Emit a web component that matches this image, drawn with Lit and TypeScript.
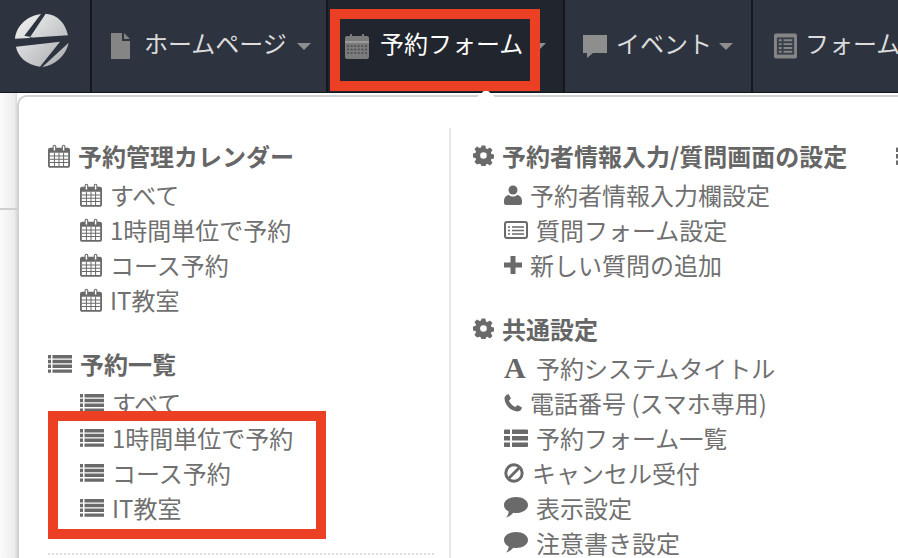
import { LitElement, html, css } from "lit";
import { customElement } from "lit/decorators.js";

const c = "#6a6a6a";
const cal = (s: number) => html`<svg class="ic" width=${s} height=${s + 2} viewBox="0 0 24 26"><path fill=${c} d="M5 4V2.600a2 2 0 0 1 4 0V4h6V2.600a2 2 0 0 1 4 0V4h2.700C22.900 4 24 5 24 6.200v17.300c0 1.200-1.100 2.300-2.300 2.300H2.300C1.100 25.800 0 24.700 0 23.500V6.200C0 5 1.100 4 2.300 4z"/><path fill="#fff" d="M6.200 2.500a.8.800 0 0 1 1.600 0V7H6.200zM16.200 2.500a.8.800 0 0 1 1.600 0V7h-1.600zM2 9.500h20v14.300H2z"/><path stroke=${c} stroke-width="1.100" fill="none" d="M2 13h20M2 16.500h20M2 20h20M7 9.500v14.300M12 9.500v14.300M17 9.500v14.300"/></svg>`;
const navCal = html`<svg class="ni" width="24" height="26" viewBox="0 0 24 26"><path fill="#7b7b7b" d="M5 3V1h2v2h10V1h2v2h3a2 2 0 0 1 2 2v19a2 2 0 0 1-2 2H2a2 2 0 0 1-2-2V5a2 2 0 0 1 2-2z"/><path fill="#9a9a9a" d="M0 8h24v2H0z"/><path stroke="#4a4d52" stroke-width="1.600" stroke-dasharray="2 1.600" d="M2 13h20M2 16.500h20M2 20h20"/></svg>`;
const list = () => html`<svg class="ic" width="24" height="18" viewBox="0 0 24 18"><path fill=${c} d="M0 0h3v3.400H0zM4.500 0H24v3.400H4.500zM0 4.800h3v3.400H0zM4.500 4.800H24v3.400H4.500zM0 9.600h3V13H0zM4.500 9.600H24V13H4.500zM0 14.400h3v3.400H0zM4.500 14.400H24v3.400H4.500z"/></svg>`;
const gear = html`<svg class="ic" width="21" height="21" viewBox="0 0 21 21"><path fill=${c} fill-rule="evenodd" d="M8.500 0h4l.6 3.100 1.500.6L17.300 2l2.700 2.700-1.700 2.700.6 1.500 3 .6v4l-3 .6-.6 1.500 1.700 2.700-2.700 2.700-2.700-1.700-1.500.6-.6 3h-4l-.6-3-1.500-.6L3.700 20 1 17.300l1.700-2.700-.6-1.500-3-.6V8.500l3-.6.6-1.500L1 3.700 3.700 1l2.700 1.700 1.500-.6zM10.500 7a3.500 3.500 0 1 0 0 7 3.500 3.500 0 0 0 0-7z" transform="translate(.5 .5) scale(.95)"/></svg>`;
const person = html`<svg class="ic" width="18" height="20" viewBox="0 0 18 20"><circle cx="9" cy="5" r="4.500" fill=${c}/><path fill=${c} d="M0 18c0 1 1 2 2 2h14c1 0 2-1 2-2v-2c0-4-3-6-5-6-1 1-2.500 1.500-4 1.500S6 11 5 10c-2 0-5 2-5 6z"/></svg>`;
const form = html`<svg class="ic" width="24" height="18" viewBox="0 0 24 18"><rect x="1" y="1" width="22" height="16" rx="2" fill="none" stroke=${c} stroke-width="2"/><path stroke=${c} stroke-width="1.600" d="M4 6h2M8 6h12M4 9.500h2M8 9.500h12M4 13h2M8 13h12"/></svg>`;
const plus = html`<svg class="ic" width="18" height="18" viewBox="0 0 18 18"><path fill=${c} d="M6.500 0h5v6.500H18v5h-6.500V18h-5v-6.500H0v-5h6.500z"/></svg>`;
const phone = html`<svg class="ic" width="18" height="18" viewBox="0 0 18 18"><path fill=${c} d="M4.500 0 7 4.500 5 6.500c.7 2.500 3.500 5.500 6.500 6.500l2-2L18 13.500c-.5 2.500-2.500 4-4.500 4C7 17.500.5 11 .5 4.500.5 2.500 2 .5 4.500 0z"/></svg>`;
const grid = html`<svg class="ic" width="24" height="18" viewBox="0 0 24 18"><path fill=${c} d="M0 1.500a1 1 0 0 1 1-1h5v4.500H0zM8 .5h15a1 1 0 0 1 1 1V5H8zM0 7h6v4.500H0zM8 7h16v4.500H8zM0 13.500h6V18H1a1 1 0 0 1-1-1zM8 13.500h16V17a1 1 0 0 1-1 1H8z"/></svg>`;
const ban = html`<svg class="ic" width="20" height="20" viewBox="0 0 20 20"><circle cx="10" cy="10" r="8.200" fill="none" stroke=${c} stroke-width="3"/><path stroke=${c} stroke-width="3" d="M4.500 15.500l11-11"/></svg>`;
const bubble = html`<svg class="ic" width="24" height="22" viewBox="0 0 24 22"><path fill=${c} d="M12 0c6.600 0 12 3.500 12 8s-5.400 8-12 8c-1 0-1.900-.1-2.800-.2C7.500 18 5 19.500 2 20.500c1.500-1.500 2.500-3.300 2.700-6C1.800 13.100 0 10.700 0 8c0-4.500 5.400-8 12-8z"/></svg>`;
const serifA = html`<span class="a">A</span>`;

const leftA = ["すべて", "1時間単位で予約", "コース予約", "IT教室"];

@customElement("app-root")
export class AppRoot extends LitElement {
  static styles = css`
    :host { display: block; width: 898px; height: 558px; overflow: hidden; position: relative; background: #fff; font-family: "Noto Sans CJK JP", "Liberation Sans", sans-serif; }
    .bar { height: 92px; background: #2d3440; border-bottom: 1px solid #15181d; display: flex; color: #dcdcdc; font-size: 24px; }
    .cell { height: 92px; border-right: 2px solid #14171b; box-sizing: border-box; display: flex; align-items: center; flex: none; }
    .logo { width: 92px; justify-content: center; padding-bottom: 12px; }
    .home { width: 236px; padding-left: 19px; }
    .active { width: 237px; background: #21252d; color: #fff; padding-left: 17px; }
    .event { width: 188px; padding-left: 17px; }
    .forms { flex: 1; border-right: 0; padding-left: 21px; }
    .lbl { white-space: nowrap; line-height: 1; padding-bottom: 6px; }
    .caret { width: 0; height: 0; border: 7.500px solid transparent; border-top-color: #8e8e8e; border-bottom: 0; margin-left: 10px; }
    .ni { flex: none; }
    .ni-file { margin-right: 13px; }
    .ni-bubble { margin-right: 8px; }
    .ni-form { margin-right: 8px; }
    .lbl-active { margin-left: 11px; }
    .caret-active { margin-left: 9px; }
    .caret-event { margin-left: 7px; }
    .page { position: absolute; inset: 93px 0 0 0; background: linear-gradient(90deg, #fbfbfb, #ededed 14px, #dcdcdc 17px, #fff 17px); }
    .rule { position: absolute; left: 0; width: 17px; top: 115px; height: 2px; background: #cfcfcf; }
    .panel { position: absolute; left: 17px; top: 2px; width: 1000px; height: 600px; background: #fff; border: 2px solid #d2d2d2; border-radius: 10px; box-sizing: border-box; }
    .arrow { position: absolute; left: 476px; top: 89px; width: 0; height: 0; border: 10px solid transparent; border-bottom-color: #fff; border-top: 0; border-bottom-width: 9px; z-index: 2; }
    .columns { display: flex; padding: 41px 0 0 29px; }
    .col1 { width: 401px; flex: none; }
    .col2 { border-left: 2px solid #e6e6e6; padding-left: 22px; width: 447px; flex: none; height: 540px; margin-top: -10px; padding-top: 10px; box-sizing: border-box; }
    .col3 { flex: none; padding-top: 9px; }
    .col3 .ic { display: block; }
    .group { margin-bottom: 29px; }
    h3 { margin: 0 0 4px; font-size: 24px; font-weight: 700; color: #666; display: flex; align-items: center; gap: 8px; line-height: 35px; height: 35px; white-space: nowrap; }
    ul { list-style: none; margin: 0; padding: 0 0 0 32px; }
    .col2 ul { padding-left: 31px; }
    li { display: flex; align-items: center; gap: 8px; height: 35px; font-size: 24px; line-height: 35px; color: #707070; white-space: nowrap; }
    .ic { flex: none; }
    .a { font: 700 30px/1 "Liberation Serif", serif; color: #666; width: 24px; }
    .dotted { position: absolute; left: 48px; top: 553px; width: 386px; border-top: 2px dotted #ddd; }
    .red { position: absolute; border: 10px solid #ec4024; box-sizing: border-box; z-index: 3; }
    .r1 { left: 330px; top: 9px; width: 210px; height: 82px; }
    .r2 { left: 48px; top: 411px; width: 278px; height: 128px; }
  `;

  render() {
    return html`
      <div class="bar">
        <div class="cell logo"><svg width="80" height="70" viewBox="0 0 240 210">
          <defs><linearGradient id="lg" x1="0" y1="0" x2="1" y2="1"><stop offset="0" stop-color="#f6f6f6"/><stop offset="1" stop-color="#a6a8ab"/></linearGradient></defs>
          <path fill="url(#lg)" d="M108 27C68 32 34 62 30 101L88 98 58 92zM122 26C158 28 182 56 189 91L74 98zM33 125 165 110 105 185C66 180 38 155 33 125zM191 113C184 150 152 180 112 186z"/>
        </svg></div>
        <div class="cell home"><svg class="ni ni-file" width="20" height="28" viewBox="0 0 20 28"><path fill="#858585" d="M0 1h11v8h8v18H0zM13 1l6 6h-6z"/></svg><span class="lbl">ホームページ</span><span class="caret"></span></div>
        <div class="cell active">${navCal}<span class="lbl lbl-active">予約フォーム</span><span class="caret caret-active"></span></div>
        <div class="cell event"><svg class="ni ni-bubble" width="26" height="24" viewBox="0 0 26 24"><path fill="#8e8e8e" d="M1 1h24v18H11l-6 5v-5H1z"/></svg><span class="lbl">イベント</span><span class="caret caret-event"></span></div>
        <div class="cell forms"><svg class="ni ni-form" width="23" height="26" viewBox="0 0 24 26"><rect width="24" height="26" rx="2" fill="#858585"/><rect x="3" y="4" width="18" height="18" fill="#3a404b"/><path stroke="#858585" stroke-width="2" d="M5 7h3M10 7h9M5 11h3M10 11h9M5 15h3M10 15h9M5 19h3M10 19h9"/></svg><span class="lbl">フォーム</span></div>
      </div>
      <div class="page">
        <div class="rule"></div>
        <div class="panel">
          <div class="columns">
            <div class="col1">
              <div class="group">
                <h3>${cal(22)}<span>予約管理カレンダー</span></h3>
                <ul>${leftA.map((t) => html`<li>${cal(22)}<span>${t}</span></li>`)}</ul>
              </div>
              <div class="group">
                <h3>${list()}<span>予約一覧</span></h3>
                <ul>${leftA.map((t) => html`<li>${list()}<span>${t}</span></li>`)}</ul>
              </div>
            </div>
            <div class="col2">
              <div class="group">
                <h3>${gear}<span>予約者情報入力/質問画面の設定</span></h3>
                <ul>
                  <li>${person}<span>予約者情報入力欄設定</span></li>
                  <li>${form}<span>質問フォーム設定</span></li>
                  <li>${plus}<span>新しい質問の追加</span></li>
                </ul>
              </div>
              <div class="group">
                <h3>${gear}<span>共通設定</span></h3>
                <ul>
                  <li>${serifA}<span>予約システムタイトル</span></li>
                  <li>${phone}<span>電話番号 (スマホ専用)</span></li>
                  <li>${grid}<span>予約フォーム一覧</span></li>
                  <li>${ban}<span>キャンセル受付</span></li>
                  <li>${bubble}<span>表示設定</span></li>
                  <li>${bubble}<span>注意書き設定</span></li>
                </ul>
              </div>
            </div>
            <div class="col3">${grid}</div>
          </div>
        </div>
      </div>
      <div class="arrow"></div>
      <div class="dotted"></div>
      <div class="red r1"></div>
      <div class="red r2"></div>
    `;
  }
}
